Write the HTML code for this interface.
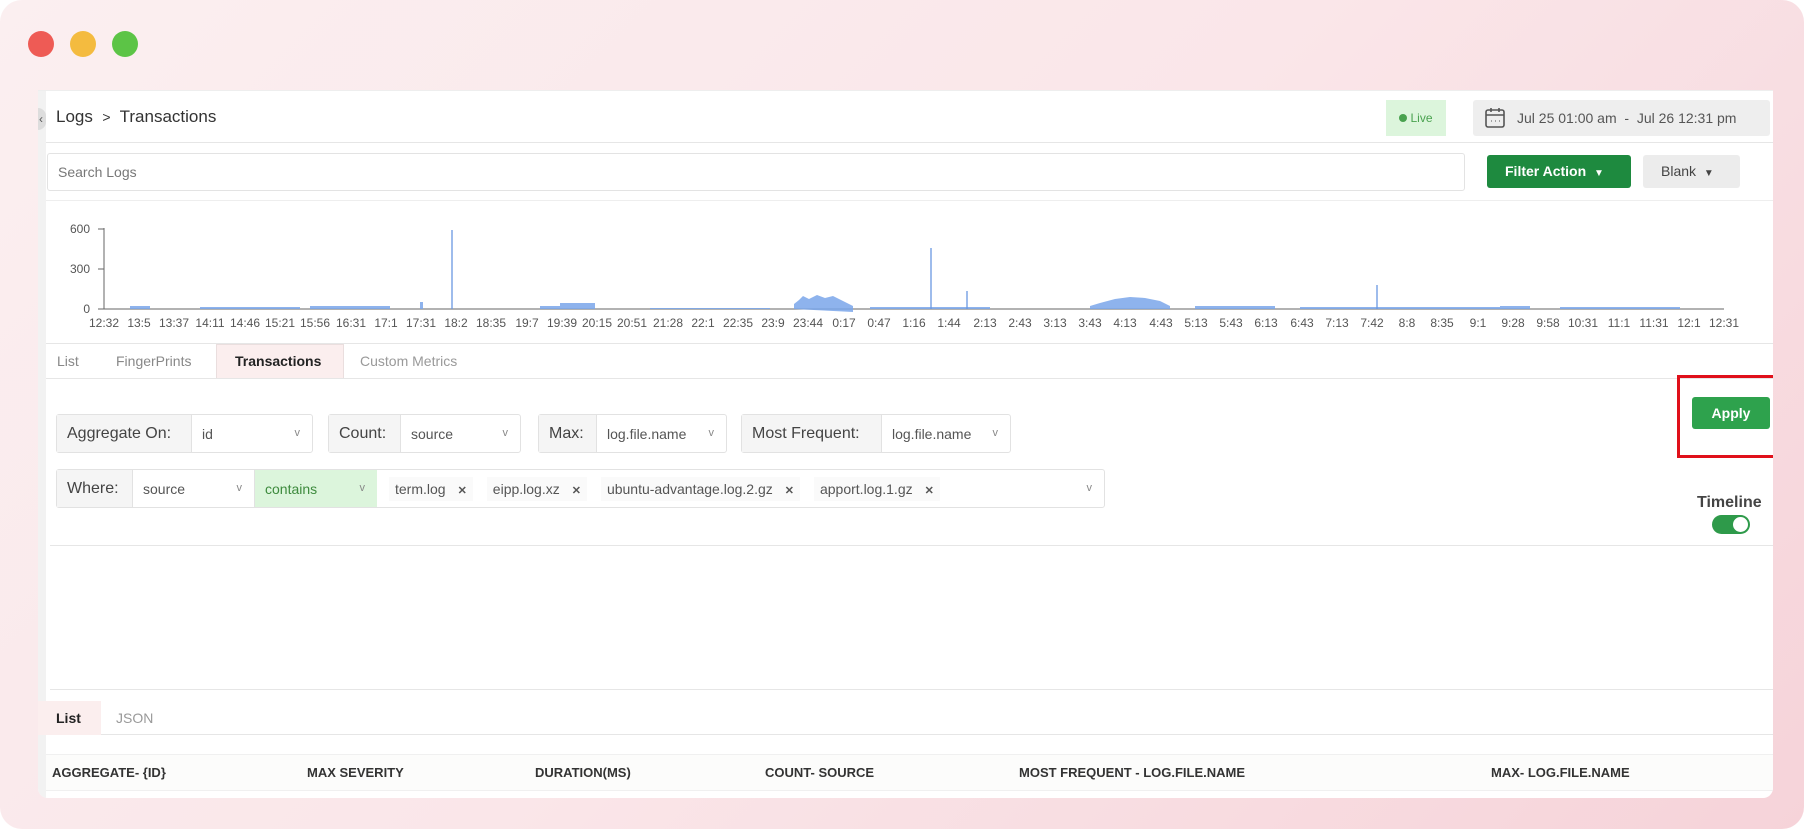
<!DOCTYPE html>
<html><head><meta charset="utf-8"><style>
*{box-sizing:border-box;margin:0;padding:0}
body{width:1805px;height:830px;overflow:hidden;background:#fff;font-family:"Liberation Sans",sans-serif;color:#333}
.frame{position:absolute;left:0;top:0;width:1804px;height:829px;border-radius:22px;background:linear-gradient(135deg,#fbeff0 0%,#fae6e9 50%,#f6d3d9 100%)}
.dot{position:absolute;top:31px;width:26px;height:26px;border-radius:50%}
.card{position:absolute;left:38px;top:90px;width:1735px;height:708px;background:#fff;border-radius:0 0 10px 10px;overflow:hidden;border-top:1px solid #eee}
.abs{position:absolute}
.hl{position:absolute;height:1px;background:#e6e6e6}
.sel{position:absolute;height:39px;border:1px solid #e2e2e2;border-radius:3px;font-size:15px;display:flex;align-items:center}
.lab{background:#f5f5f5;height:100%;display:flex;align-items:center;padding-left:10px;border-right:1px solid #e2e2e2;color:#444;font-size:16px}
.opt{height:100%;display:flex;align-items:center;padding-left:10px;color:#555;font-size:14px;position:relative}
.opt:after{content:"v";position:absolute;right:12px;top:12px;font-size:11px;color:#888}
.tag{font-size:14px;color:#555;margin-right:14px;background:#fafafa;padding:4px 6px}
.tag b{font-size:11px;color:#555;margin-left:12px}
</style></head><body>
<div class="frame"></div>
<div class="dot" style="left:28px;background:#ee5b55"></div>
<div class="dot" style="left:70px;background:#f4bb3f"></div>
<div class="dot" style="left:112px;background:#5cc446"></div>
<div class="card">
  <div class="abs" style="left:0;top:0;width:8px;height:708px;background:#f2f2f2"></div>
  <div class="abs" style="left:-8px;top:17px;width:16px;height:22px;border-radius:8px;background:#ddd;font-size:12px;line-height:22px;text-align:right;padding-right:3px;color:#555">‹</div>
  <div class="abs" style="left:18px;top:16px;font-size:17px;color:#333">Logs &nbsp;<span style="font-size:14px">&gt;</span>&nbsp; Transactions</div>
  <div class="abs" style="left:1348px;top:9px;width:60px;height:36px;background:#dcf5dc;font-size:12px;color:#49a24f;line-height:36px;text-align:center"><span style="display:inline-block;width:8px;height:8px;border-radius:50%;background:#49a24f;margin-right:3px"></span>Live</div>
  <div class="abs" style="left:1435px;top:9px;width:297px;height:36px;background:#eee;border-radius:3px;font-size:14px;color:#555;line-height:36px;padding-left:44px">Jul 25 01:00 am &nbsp;- &nbsp;Jul 26 12:31 pm</div>
  <svg class="abs" style="left:1445px;top:15px" width="24" height="24" viewBox="0 0 24 24" fill="none" stroke="#555" stroke-width="1.6"><rect x="3" y="4" width="18" height="17" rx="2"/><path d="M3 9h18M8 2v4M16 2v4"/><path d="M8 15h.5M12 15h.5M16 15h.5" stroke-width="2"/></svg>
  <div class="hl" style="left:8px;top:51px;width:1727px"></div>
  <div class="abs" style="left:9px;top:62px;width:1418px;height:38px;border:1px solid #e3e3e3;border-radius:3px;font-size:14px;color:#777;line-height:36px;padding-left:10px">Search Logs</div>
  <div class="abs" style="left:1449px;top:64px;width:144px;height:33px;background:#1e8a3f;border-radius:3px;color:#fff;font-size:14px;font-weight:bold;line-height:33px;padding-left:18px">Filter Action &nbsp;<span style="font-size:10px">▼</span></div>
  <div class="abs" style="left:1605px;top:64px;width:97px;height:33px;background:#ececec;border-radius:3px;color:#444;font-size:14px;line-height:33px;padding-left:18px">Blank &nbsp;<span style="font-size:10px">▼</span></div>
  <div class="hl" style="left:8px;top:109px;width:1727px;background:#eee"></div>
  <svg class="abs" style="left:0;top:110px" width="1735" height="232" font-family="Liberation Sans" font-size="12" fill="#555">
    <g transform="translate(-38,-200)">
    <text x="90" y="232" text-anchor="end">600</text><text x="90" y="272" text-anchor="end">300</text><text x="90" y="312" text-anchor="end">0</text>
    <path d="M104 227v81M98 228h6M98 268h6M98 308h6M104 308H1724" stroke="#666" stroke-width="1"/>
    <g fill="#7aa6ea" opacity="0.85">
      <path d="M130 308v-3h20v3zM200 308v-2h100v2zM310 308v-3h80v3zM420 308v-7h3v7zM540 308v-3h20v-3h35v6zM650 308v-1h120v1zM794 308v-5l5-4 4-4 6 3 8-4 8 3 8-2 8 4 6 3 6 3v6zM870 308v-2h120v2zM1090 308v-3l10-3 15-4 15-2 15 1 15 3 10 5v3zM1195 308v-3h80v3zM1300 308v-2h200v2zM1500 308v-3h30v3zM1560 308v-2h120v2z"/>
    </g>
    <path d="M452 308V229M931 308V247M967 308V290M1377 308V284" stroke="#6a98e2" stroke-width="1.3"/>
    <g text-anchor="middle">
<text x="104" y="326">12:32</text><text x="139" y="326">13:5</text><text x="174" y="326">13:37</text><text x="210" y="326">14:11</text><text x="245" y="326">14:46</text><text x="280" y="326">15:21</text><text x="315" y="326">15:56</text><text x="351" y="326">16:31</text><text x="386" y="326">17:1</text><text x="421" y="326">17:31</text><text x="456" y="326">18:2</text><text x="491" y="326">18:35</text><text x="527" y="326">19:7</text><text x="562" y="326">19:39</text><text x="597" y="326">20:15</text><text x="632" y="326">20:51</text><text x="668" y="326">21:28</text><text x="703" y="326">22:1</text><text x="738" y="326">22:35</text><text x="773" y="326">23:9</text><text x="808" y="326">23:44</text><text x="844" y="326">0:17</text><text x="879" y="326">0:47</text><text x="914" y="326">1:16</text><text x="949" y="326">1:44</text><text x="985" y="326">2:13</text><text x="1020" y="326">2:43</text><text x="1055" y="326">3:13</text><text x="1090" y="326">3:43</text><text x="1125" y="326">4:13</text><text x="1161" y="326">4:43</text><text x="1196" y="326">5:13</text><text x="1231" y="326">5:43</text><text x="1266" y="326">6:13</text><text x="1302" y="326">6:43</text><text x="1337" y="326">7:13</text><text x="1372" y="326">7:42</text><text x="1407" y="326">8:8</text><text x="1442" y="326">8:35</text><text x="1478" y="326">9:1</text><text x="1513" y="326">9:28</text><text x="1548" y="326">9:58</text><text x="1583" y="326">10:31</text><text x="1619" y="326">11:1</text><text x="1654" y="326">11:31</text><text x="1689" y="326">12:1</text><text x="1724" y="326">12:31</text>
    </g></g>
  </svg>
  <div class="hl" style="left:8px;top:252px;width:1727px"></div>
  <div class="abs" style="left:178px;top:253px;width:128px;height:34px;background:#fbeeee;border:1px solid #eadede;border-bottom:none"></div>
  <div class="abs" style="left:19px;top:262px;font-size:14px;color:#888">List</div>
  <div class="abs" style="left:78px;top:262px;font-size:14px;color:#888">FingerPrints</div>
  <div class="abs" style="left:197px;top:262px;font-size:14px;color:#222;font-weight:bold">Transactions</div>
  <div class="abs" style="left:322px;top:262px;font-size:14px;color:#999">Custom Metrics</div>
  <div class="hl" style="left:8px;top:287px;width:1727px"></div>

  <div class="sel" style="left:18px;top:323px;width:257px"><div class="lab" style="width:135px">Aggregate On:</div><div class="opt" style="flex:1">id</div></div>
  <div class="sel" style="left:290px;top:323px;width:193px"><div class="lab" style="width:72px">Count:</div><div class="opt" style="flex:1">source</div></div>
  <div class="sel" style="left:500px;top:323px;width:189px"><div class="lab" style="width:58px">Max:</div><div class="opt" style="flex:1">log.file.name</div></div>
  <div class="sel" style="left:703px;top:323px;width:270px"><div class="lab" style="width:140px">Most Frequent:</div><div class="opt" style="flex:1">log.file.name</div></div>

  <div class="sel" style="left:18px;top:378px;width:1049px"><div class="lab" style="width:76px">Where:</div><div class="opt" style="width:122px;border-right:1px solid #e2e2e2">source</div><div class="opt" style="width:122px;background:#dcf5dc;color:#3d8a3d">contains</div><div class="opt" style="flex:1;padding-left:12px"><span class="tag">term.log<b>✕</b></span><span class="tag">eipp.log.xz<b>✕</b></span><span class="tag">ubuntu-advantage.log.2.gz<b>✕</b></span><span class="tag">apport.log.1.gz<b>✕</b></span></div></div>

  <div class="abs" style="left:1639px;top:284px;width:100px;height:83px;border:3px solid #e0101a"></div>
  <div class="abs" style="left:1654px;top:306px;width:78px;height:32px;background:#2ea24d;border-radius:3px;color:#fff;font-size:14px;font-weight:bold;line-height:32px;text-align:center">Apply</div>
  <div class="abs" style="left:1659px;top:403px;font-size:16px;font-weight:bold;color:#444">Timeline</div>
  <div class="abs" style="left:1674px;top:424px;width:38px;height:19px;border-radius:10px;background:#2e9a4a"><div style="position:absolute;right:2px;top:2px;width:15px;height:15px;border-radius:50%;background:#fff"></div></div>
  <div class="hl" style="left:12px;top:454px;width:1723px"></div>
  <div class="hl" style="left:12px;top:598px;width:1723px"></div>
  <div class="abs" style="left:0;top:610px;width:63px;height:34px;background:#fbeeee"></div>
  <div class="abs" style="left:18px;top:619px;font-size:14px;color:#222;font-weight:bold">List</div>
  <div class="abs" style="left:78px;top:619px;font-size:14px;color:#999">JSON</div>
  <div class="hl" style="left:63px;top:643px;width:1672px"></div>
  <div class="abs" style="left:8px;top:663px;width:1727px;height:37px;background:#fcfcfb;border-top:1px solid #f0f0f0;border-bottom:1px solid #f0f0f0"></div>
  <div class="abs" style="top:674px;left:14px;font-size:13px;font-weight:bold;color:#333">AGGREGATE- {ID}</div>
  <div class="abs" style="top:674px;left:269px;font-size:13px;font-weight:bold;color:#333">MAX SEVERITY</div>
  <div class="abs" style="top:674px;left:497px;font-size:13px;font-weight:bold;color:#333">DURATION(MS)</div>
  <div class="abs" style="top:674px;left:727px;font-size:13px;font-weight:bold;color:#333">COUNT- SOURCE</div>
  <div class="abs" style="top:674px;left:981px;font-size:13px;font-weight:bold;color:#333">MOST FREQUENT - LOG.FILE.NAME</div>
  <div class="abs" style="top:674px;left:1453px;font-size:13px;font-weight:bold;color:#333">MAX- LOG.FILE.NAME</div>
</div>
</body></html>
